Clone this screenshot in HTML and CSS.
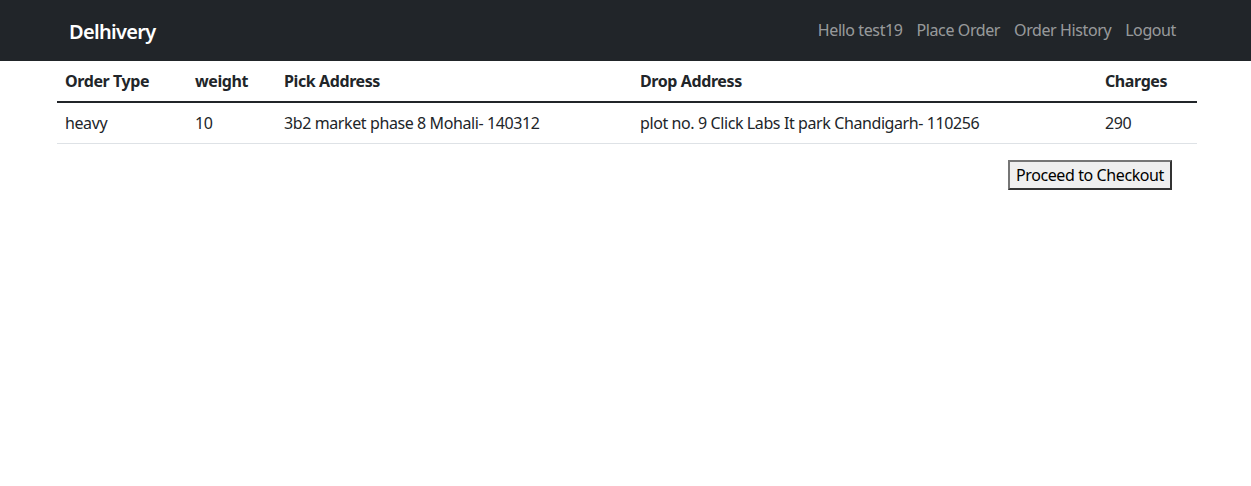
FILE: index.html
```html
<!DOCTYPE html>
<html>
<head>
<meta charset="utf-8">
<link rel="stylesheet" href="styles.css">
</head>
<body>
<nav class="navbar">
  <div class="nav-inner">
    <a class="brand">Delhivery</a>
    <ul class="nav-links">
      <li>Hello test19</li>
      <li>Place Order</li>
      <li>Order History</li>
      <li>Logout</li>
    </ul>
  </div>
</nav>
<main class="container">
  <table class="orders">
    <colgroup>
      <col class="c1"><col class="c2"><col class="c3"><col class="c4"><col class="c5">
    </colgroup>
    <thead>
      <tr><th>Order Type</th><th>weight</th><th>Pick Address</th><th>Drop Address</th><th>Charges</th></tr>
    </thead>
    <tbody>
      <tr><td>heavy</td><td>10</td><td>3b2 market phase 8 Mohali- 140312</td><td>plot no. 9 Click Labs It park Chandigarh- 110256</td><td>290</td></tr>
    </tbody>
  </table>
  <div class="actions">
    <button class="checkout">Proceed to Checkout</button>
  </div>
</main>
</body>
</html>
```
FILE: styles.css
```css
* { box-sizing: border-box; }
body {
  margin: 0;
  font-family: "Noto Sans", "Open Sans", sans-serif;
  font-size: 16px;
  line-height: 1.5;
  letter-spacing: -0.4px;
  color: #212529;
  background: #fff;
}
.navbar {
  background: #212529;
  height: 61px;
}
.nav-inner {
  display: flex;
  align-items: center;
  justify-content: space-between;
  height: 100%;
  padding: 0 75px 0 69px;
}
.brand {
  color: #fff;
  font-size: 20px;
  font-weight: 600;
  letter-spacing: -0.7px;
  padding-top: 3px;
}
.nav-links {
  display: flex;
  list-style: none;
  margin: 0;
  padding: 0 0 2px;
  gap: 14px;
}
.nav-links li {
  color: rgba(255,255,255,.55);
  font-size: 16px;
}
.container {
  padding: 0 54px 0 57px;
}
.orders {
  width: 100%;
  border-collapse: collapse;
  table-layout: fixed;
}
.c1 { width: 130px; }
.c2 { width: 89px; }
.c3 { width: 356px; }
.c4 { width: 465px; }
.c5 { width: 100px; }
.orders th, .orders td {
  text-align: left;
  padding: 8px;
  line-height: 24px;
  white-space: nowrap;
}
.orders th {
  font-weight: 700;
  border-bottom: 2px solid #212529;
}
.orders td {
  border-bottom: 1px solid #dee2e6;
}
.actions {
  display: flex;
  justify-content: flex-end;
  padding: 16px 25px 0 0;
}
.checkout {
  font-family: inherit;
  font-size: 16px;
  letter-spacing: -0.4px;
  line-height: 22px;
  padding: 2px 6px;
  color: #000;
  background: #efefef;
  border: 2px solid #767676;
  border-color: #767676 #333 #333 #767676;
}
```
